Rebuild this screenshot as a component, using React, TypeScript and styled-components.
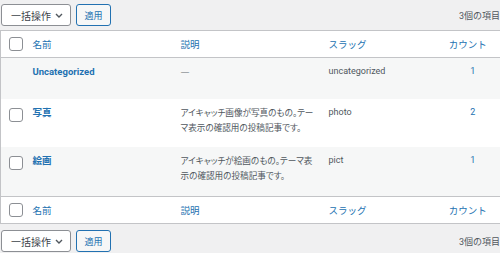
import React from 'react';
import styled, {createGlobalStyle} from 'styled-components';

const GlobalStyle = createGlobalStyle`
  body {
    margin: 0;
    background: #f0f0f1;
    font-family: Roboto, "Noto Sans CJK JP", sans-serif;
    color: #3c434a;
  }
`;

const Page = styled.div`
  width: 500px;
  height: 253px;
  overflow: hidden;
  display: flex;
  flex-direction: column;
`;

const Toolbar = styled.div<{ $top: number; $bottom: number }>`
  display: flex;
  align-items: center;
  gap: 5px;
  padding-left: 1px;
  margin: ${p => p.$top}px 0 ${p => p.$bottom}px;
  height: 22px;
  flex-shrink: 0;
`;

const Select = styled.div`
  box-sizing: border-box;
  height: 22px;
  width: 70px;
  display: flex;
  align-items: center;
  justify-content: space-between;
  padding: 0 7px 0 9px;
  border: 1px solid #8c8f94;
  border-radius: 3px;
  background: #fff;
  color: #3c434a;
  font-size: 10px;
`;

const ApplyButton = styled.button`
  box-sizing: border-box;
  height: 22px;
  width: 35px;
  padding: 0;
  border: 1px solid #2271b1;
  border-radius: 3px;
  background: #f6f7f7;
  color: #2271b1;
  font-family: inherit;
  font-size: 9px;
`;

const Count = styled.span`
  margin-left: auto;
  font-size: 9px;
  color: #50575e;
`;

const Table = styled.table`
  width: 500px;
  border-collapse: collapse;
  table-layout: fixed;
  background: #fff;
  border: 1px solid #c3c4c7;
  flex-shrink: 0;
`;

const HeadCell = styled.th<{ $center?: boolean }>`
  height: 26px;
  padding: ${p => (p.$center ? '0 10px 0 0' : '0 7px')};
  text-align: ${p => (p.$center ? 'center' : 'left')};
  font-weight: normal;
  font-size: 9.5px;
  color: #2271b1;
  vertical-align: middle;
  white-space: nowrap;
`;

const HeadRow = styled.tr<{ $foot?: boolean }>`
  border-${p => (p.$foot ? 'top' : 'bottom')}: 1px solid #c3c4c7;
`;

const Row = styled.tr<{ $h: number; $alt?: boolean }>`
  height: ${p => p.$h}px;
  background: ${p => (p.$alt ? '#f6f7f7' : '#fff')};
`;

const Cell = styled.td<{ $center?: boolean }>`
  padding: 6px 7px 0;
  vertical-align: top;
  font-size: 9px;
  line-height: 15px;
  color: #50575e;
  text-align: ${p => (p.$center ? 'center' : 'left')};
`;

const DescCell = styled(Cell)`
  padding-right: 2px;
  font-family: "Noto Sans CJK JP", sans-serif;
  font-size: 8.6px;
  font-feature-settings: "palt";
`;

const Dash = styled.span`
  font-family: "DejaVu Sans", sans-serif;
  font-size: 9px;
  color: #646970;
`;

const CheckCell = styled.td`
  padding: 9px 0 0 8px;
  vertical-align: top;
`;

const CheckHead = styled.th`
  padding: 0 0 0 8px;
  vertical-align: middle;
`;

const Box = styled.span`
  display: block;
  box-sizing: border-box;
  width: 14px;
  height: 14px;
  border: 1px solid #8c8f94;
  border-radius: 3px;
  background: #fff;
`;

const Title = styled.a`
  color: #2271b1;
  font-weight: bold;
  font-size: 9.5px;
  text-decoration: none;
`;

const Link = styled.a`
  color: #2271b1;
  text-decoration: none;
`;

const Chevron = () => (
  <svg width="8" height="5" viewBox="0 0 8 5">
    <path d="M1 1l3 3 3-3" fill="none" stroke="#50575e" strokeWidth="1.4" />
  </svg>
);

const rows = [
  {name: 'Uncategorized', desc: '', slug: 'uncategorized', count: 1, h: 41, check: false},
  {name: '写真', desc: 'アイキャッチ画像が写真のもの。テーマ表示の確認用の投稿記事です。', slug: 'photo', count: 2, h: 48, check: true},
  {name: '絵画', desc: 'アイキャッチが絵画のもの。テーマ表示の確認用の投稿記事です。', slug: 'pict', count: 1, h: 50, check: true},
];

function Bar({top, bottom}: { top: number; bottom: number }) {
  return (
    <Toolbar $top={top} $bottom={bottom}>
      <Select>一括操作<Chevron /></Select>
      <ApplyButton>適用</ApplyButton>
      <Count>3個の項目</Count>
    </Toolbar>
  );
}

function Heads({foot}: { foot?: boolean }) {
  return (
    <HeadRow $foot={foot}>
      <CheckHead><Box /></CheckHead>
      <HeadCell>名前</HeadCell>
      <HeadCell>説明</HeadCell>
      <HeadCell>スラッグ</HeadCell>
      <HeadCell $center>カウント</HeadCell>
    </HeadRow>
  );
}

function App() {
  return (
    <Page>
      <GlobalStyle />
      <Bar top={4} bottom={4} />
      <Table>
        <colgroup>
          <col style={{width: 25}} />
          <col style={{width: 148}} />
          <col style={{width: 148}} />
          <col style={{width: 124}} />
          <col style={{width: 55}} />
        </colgroup>
        <thead><Heads /></thead>
        <tbody>
          {rows.map((r, i) => (
            <Row key={r.slug} $h={r.h} $alt={i % 2 === 0}>
              <CheckCell>{r.check && <Box />}</CheckCell>
              <Cell><Title href="#">{r.name}</Title></Cell>
              <DescCell>{r.desc || <Dash>—</Dash>}</DescCell>
              <Cell>{r.slug}</Cell>
              <Cell $center><Link href="#">{r.count}</Link></Cell>
            </Row>
          ))}
        </tbody>
        <tfoot><Heads foot /></tfoot>
      </Table>
      <Bar top={6} bottom={0} />
    </Page>
  );
}

export default App;
